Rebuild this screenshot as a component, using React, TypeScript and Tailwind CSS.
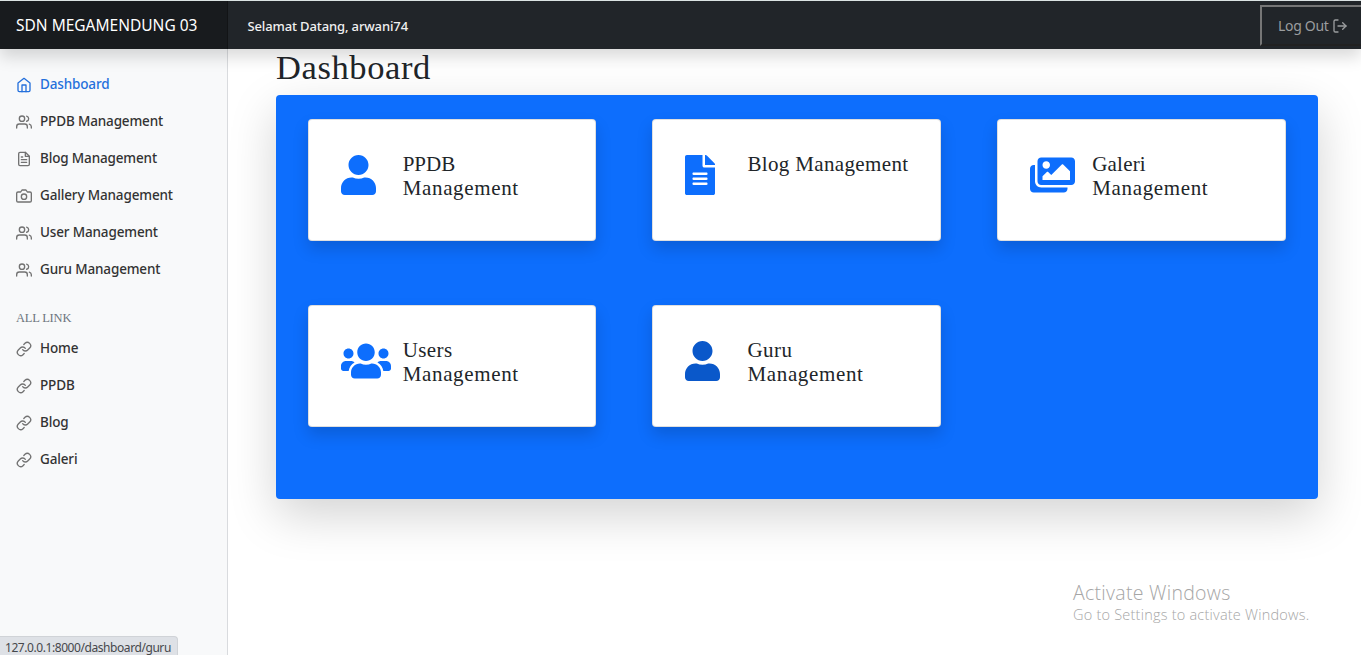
import type { ComponentType } from 'react';
import { FiHome, FiUsers, FiFileText, FiCamera, FiLink, FiLogOut } from 'react-icons/fi';
import { FaUser, FaFileAlt, FaImages, FaUsers } from 'react-icons/fa';

type Icon = ComponentType<{ className?: string }>;

const menu: { label: string; icon: Icon; active?: boolean }[] = [
  { label: 'Dashboard', icon: FiHome, active: true },
  { label: 'PPDB Management', icon: FiUsers },
  { label: 'Blog Management', icon: FiFileText },
  { label: 'Gallery Management', icon: FiCamera },
  { label: 'User Management', icon: FiUsers },
  { label: 'Guru Management', icon: FiUsers },
];

const links = ['Home', 'PPDB', 'Blog', 'Galeri'];

type Line = { text: string; track: string };

const management: Line = { text: 'Management', track: 'tracking-[0.65px]' };

const cards: { lines: Line[]; icon: Icon; size: string; color: string }[] = [
  { lines: [{ text: 'PPDB', track: 'tracking-[0px]' }, management], icon: FaUser, size: 'w-[35px]', color: 'text-[#0d6efd]' },
  { lines: [{ text: 'Blog Management', track: 'tracking-[0.35px]' }], icon: FaFileAlt, size: 'w-[30px]', color: 'text-[#0d6efd]' },
  { lines: [{ text: 'Galeri', track: 'tracking-[0.2px]' }, management], icon: FaImages, size: 'w-[45px]', color: 'text-[#0d6efd]' },
  { lines: [{ text: 'Users', track: 'tracking-[0.4px]' }, management], icon: FaUsers, size: 'w-[50px]', color: 'text-[#0d6efd]' },
  { lines: [{ text: 'Guru', track: 'tracking-[0.5px]' }, management], icon: FaUser, size: 'w-[35px]', color: 'text-[#0a58ca]' },
];

function NavItem({ label, icon: I, active }: { label: string; icon: Icon; active?: boolean }) {
  return (
    <a className={`flex h-[37px] items-center px-4 text-[13.5px] font-medium tracking-[-0.15px] whitespace-nowrap ${active ? 'text-[#2470dc]' : 'text-[#333]'}`}>
      <I className={`mr-2 h-4 w-4 ${active ? '' : 'text-[#727272]'}`} />
      {label}
    </a>
  );
}

function Header() {
  return (
    <header className="relative z-10 flex h-[49px] shrink-0 border-t border-[#dbe3e3] bg-[#212529] text-white shadow-[0_8px_16px_rgba(0,0,0,0.15)]">
      <div className="flex w-[228px] items-center bg-black/25 pt-[2px] pl-4 text-[15.5px] whitespace-nowrap shadow-[inset_-1px_0_0_rgba(0,0,0,0.25)]">
        SDN MEGAMENDUNG 03
      </div>
      <div className="flex flex-1 items-center pt-[3px] pl-[19.5px] text-[13px] font-medium tracking-[-0.13px] text-[#f0f0f0]">Selamat Datang, arwani74</div>
      <button className="mt-1 flex h-[41px] w-[101px] items-center border-t-2 border-b-2 border-l-2 border-t-[#767676] border-b-[#212121] border-l-[#767676] pl-4 text-[14px] tracking-[-0.3px] text-[#9b9d9f]">
        Log Out
        <FiLogOut className="mt-px ml-[3px] h-4 w-4" />
      </button>
    </header>
  );
}

export default function App() {
  return (
    <div className="relative flex h-[655px] w-[1361px] flex-col overflow-hidden bg-white font-['Noto_Sans',sans-serif] text-[#212529]">
      <Header />
      <div className="flex min-h-0 flex-1">
        <aside className="w-[228px] shrink-0 border-r border-[#d9dbde] bg-[#f8f9fa] pt-[17px]">
          <nav>
            {menu.map((m) => (
              <NavItem key={m.label} {...m} />
            ))}
          </nav>
          <h6 className="mt-[22px] mb-[3px] flex h-[17px] items-center px-4 font-['Liberation_Serif',serif] text-[12.5px] tracking-[-0.2px] text-[#6c757d]">ALL LINK</h6>
          <nav>
            {links.map((l) => (
              <NavItem key={l} label={l} icon={FiLink} />
            ))}
          </nav>
        </aside>
        <main className="flex-1 pr-[43px] pl-12 font-['Liberation_Serif',serif]">
          <h1 className="h-[46px] text-[34.5px] leading-[37px] tracking-[0.6px]">Dashboard</h1>
          <section className="grid h-[404px] grid-cols-3 content-start gap-x-14 gap-y-16 rounded-[4px] bg-[#0d6efd] pt-6 pr-8 pl-[31.7px] shadow-[0_16px_48px_rgba(0,0,0,0.175)]">
            {cards.map(({ lines, icon: I, size, color }, i) => (
              <article key={i} className="flex h-[122px] rounded-[4px] border border-black/[0.125] bg-white px-8 pt-[35px] shadow-[0_8px_16px_rgba(0,0,0,0.15)]">
                <div className="w-[62px] shrink-0">
                  <I className={`h-10 ${size} ${color}`} />
                </div>
                <h5 className="-mt-[3px] text-[21px] leading-6 whitespace-nowrap">
                  {lines.map(({ text, track }) => (
                    <span key={text} className={`block ${track}`}>{text}</span>
                  ))}
                </h5>
              </article>
            ))}
          </section>
        </main>
      </div>
      <div className="absolute bottom-0 left-0 flex h-[19px] w-[178px] items-center rounded-tr-[4px] border-t border-r border-[#d0d3d7] bg-[#dee1e6] pt-[4px] pl-[5px] text-[12px] tracking-[-0.43px] whitespace-nowrap text-[#46484c]">
        127.0.0.1:8000/dashboard/guru
      </div>
      <div className="absolute top-[580px] left-[1073px] font-['Open_Sans',sans-serif] whitespace-nowrap text-[#a6a6a6]">
        <div className="text-[19.5px] leading-[26px] font-light tracking-[0.28px]">Activate Windows</div>
        <div className="-mt-px text-[14.5px] leading-[20px] font-light tracking-[0.22px]">Go to Settings to activate Windows.</div>
      </div>
    </div>
  );
}
